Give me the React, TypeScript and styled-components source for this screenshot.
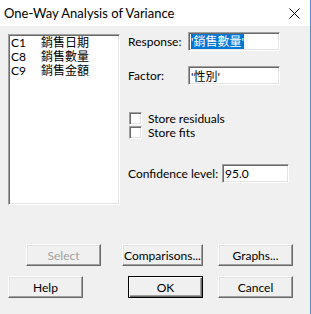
import React from 'react';
import styled, { createGlobalStyle } from 'styled-components';

const GlobalStyle = createGlobalStyle`
  html, body {
    margin: 0;
    padding: 0;
    background: #f0f0f0;
  }
`;

const UI_FONT = `Lato, "Noto Sans CJK TC", sans-serif`;

const Window = styled.div`
  width: 311px;
  height: 314px;
  box-sizing: border-box;
  background: #f0f0f0;
  border-right: 1px solid #4a90d9;
  font-family: ${UI_FONT};
  font-size: 12px;
  color: #000;
  display: flex;
  flex-direction: column;
  overflow: hidden;
`;

const TitleBar = styled.div`
  height: 26px;
  background: #fff;
  display: flex;
  align-items: center;
  justify-content: space-between;
  padding: 0 10px 0 4px;
  flex-shrink: 0;
`;

const Title = styled.span`
  font-size: 13px;
  color: #000;
`;

const Body = styled.div`
  display: flex;
  flex-direction: column;
  padding: 6px 0 0 8px;
`;

const Top = styled.div`
  display: flex;
  gap: 8px;
`;

const Sunken = styled.div`
  box-sizing: border-box;
  background: #fff;
  border-style: solid;
  border-width: 1px;
  border-color: #a0a0a0 #fff #fff #a0a0a0;
  box-shadow: inset 1px 1px #696969, inset -1px -1px #e3e3e3;
`;

const ListBox = styled(Sunken)`
  width: 112px;
  height: 171px;
  margin-top: 2px;
  padding: 1px 0 0 2px;
`;

const ListRow = styled.div`
  display: flex;
  height: 14px;
  line-height: 14px;
  white-space: nowrap;
`;

const ColName = styled.span`
  width: 30px;
`;

const Right = styled.div`
  display: flex;
  flex-direction: column;
`;

const FieldRow = styled.div<{ $gap?: number }>`
  display: flex;
  align-items: center;
  margin-top: ${p => p.$gap ?? 0}px;
  white-space: nowrap;
`;

const Label = styled.span<{ $w: number }>`
  width: ${p => p.$w}px;
`;

const TextField = styled(Sunken)<{ $w: number }>`
  width: ${p => p.$w}px;
  height: 19px;
  padding: 0 2px;
  display: flex;
  align-items: center;
  white-space: nowrap;
`;

const Selected = styled.span`
  background: #0078d7;
  color: #fff;
  line-height: 15px;
`;

const CheckRow = styled.label<{ $gap?: number }>`
  display: flex;
  align-items: center;
  gap: 6px;
  margin-left: 1px;
  margin-top: ${p => p.$gap ?? 0}px;
  height: 14px;
  white-space: nowrap;
`;

const CheckBox = styled(Sunken)`
  width: 13px;
  height: 13px;
`;

const ButtonRow = styled.div<{ $gap: number }>`
  display: flex;
  margin-top: ${p => p.$gap}px;
`;

const Button = styled.div<{ $w?: number; $ml: number; $disabled?: boolean; $default?: boolean }>`
  box-sizing: border-box;
  width: ${p => p.$w ?? 75}px;
  height: 22px;
  margin-left: ${p => p.$ml}px;
  display: flex;
  align-items: center;
  justify-content: center;
  white-space: nowrap;
  background: #f0f0f0;
  color: ${p => (p.$disabled ? '#a0a0a0' : '#000')};
  border-style: solid;
  border-width: 1px;
  border-color: ${p => (p.$default ? '#000' : '#fff #696969 #696969 #fff')};
  box-shadow: ${p =>
    p.$default
      ? 'inset 1px 1px #fff, inset -1px -1px #696969, inset -2px -2px #a0a0a0'
      : 'inset -1px -1px #a0a0a0, inset 1px 1px #e3e3e3'};
`;

const CloseIcon = () => (
  <svg width="11" height="11" viewBox="0 0 11 11">
    <path d="M0.5 0.5 L10.5 10.5 M10.5 0.5 L0.5 10.5" stroke="#000" strokeWidth="1" />
  </svg>
);

const columns = [
  ['C1', '銷售日期'],
  ['C8', '銷售數量'],
  ['C9', '銷售金額'],
];

export default function App() {
  return (
    <Window>
      <GlobalStyle />
      <TitleBar>
        <Title>One-Way Analysis of Variance</Title>
        <CloseIcon />
      </TitleBar>
      <Body>
        <Top>
          <ListBox>
            {columns.map(([c, n]) => (
              <ListRow key={c}>
                <ColName>{c}</ColName>
                <span>{n}</span>
              </ListRow>
            ))}
          </ListBox>
          <Right>
            <FieldRow>
              <Label $w={60}>Response:</Label>
              <TextField $w={92}>
                <Selected>'銷售數量'</Selected>
              </TextField>
            </FieldRow>
            <FieldRow $gap={15}>
              <Label $w={60}>Factor:</Label>
              <TextField $w={92}>'性別'</TextField>
            </FieldRow>
            <CheckRow $gap={26}>
              <CheckBox />
              Store residuals
            </CheckRow>
            <CheckRow>
              <CheckBox />
              Store fits
            </CheckRow>
            <FieldRow $gap={25}>
              <Label $w={94}>Confidence level:</Label>
              <TextField $w={67}>95.0</TextField>
            </FieldRow>
          </Right>
        </Top>
        <ButtonRow $gap={39}>
          <Button $ml={18} $disabled>Select</Button>
          <Button $ml={21} $w={81}>Comparisons...</Button>
          <Button $ml={15}>Graphs...</Button>
        </ButtonRow>
        <ButtonRow $gap={10}>
          <Button $ml={0}>Help</Button>
          <Button $ml={45} $default>OK</Button>
          <Button $ml={15}>Cancel</Button>
        </ButtonRow>
      </Body>
    </Window>
  );
}
